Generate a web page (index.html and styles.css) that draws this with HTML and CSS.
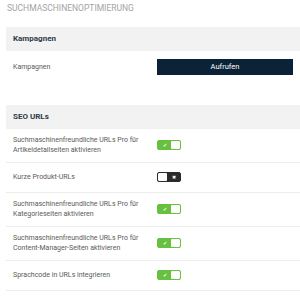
FILE: index.html
```html
<!DOCTYPE html>
<html lang="de">
<head>
    <meta charset="UTF-8">
    <meta name="viewport" content="width=device-width, initial-scale=1.0">
    <title>Suchmaschinenoptimierung</title>
    <link rel="stylesheet" href="styles.css">
</head>
<body>
    <div id="content">
        <h2 class="page-title">Suchmaschinenoptimierung</h2>

        <div class="section">
            <div class="section-header">Kampagnen</div>
            <div class="setting-row">
                <span class="setting-label">Kampagnen</span>
                <button type="button" class="btn-open">Aufrufen</button>
            </div>
        </div>

        <div class="section">
            <div class="section-header">SEO URLs</div>
            <div class="setting-row bordered">
                <span class="setting-label">Suchmaschinenfreundliche URLs Pro für Artikeldetailseiten aktivieren</span>
                <span class="switch on"><span class="switch-state">&#10004;</span><span class="switch-knob"></span></span>
            </div>
            <div class="setting-row bordered">
                <span class="setting-label">Kurze Produkt-URLs</span>
                <span class="switch off"><span class="switch-knob"></span><span class="switch-state">&#10006;</span></span>
            </div>
            <div class="setting-row bordered">
                <span class="setting-label">Suchmaschinenfreundliche URLs Pro für Kategorieseiten aktivieren</span>
                <span class="switch on"><span class="switch-state">&#10004;</span><span class="switch-knob"></span></span>
            </div>
            <div class="setting-row bordered">
                <span class="setting-label">Suchmaschinenfreundliche URLs Pro für Content-Manager-Seiten aktivieren</span>
                <span class="switch on"><span class="switch-state">&#10004;</span><span class="switch-knob"></span></span>
            </div>
            <div class="setting-row bordered">
                <span class="setting-label">Sprachcode in URLs integrieren</span>
                <span class="switch on"><span class="switch-state">&#10004;</span><span class="switch-knob"></span></span>
            </div>
        </div>
    </div>
</body>
</html>
```

FILE: styles.css
```css
body {
    margin: 0;
    font-family: Roboto, "Liberation Sans", sans-serif;
    color: #5a5a5a;
    background-color: #fff;
}

#content {
    padding: 3px 0 0 6px;
}

.page-title {
    margin: 0 0 14px 1px;
    font-size: 8.5px;
    font-weight: normal;
    text-transform: uppercase;
    color: #a3a3a3;
    line-height: 10px;
}

.section {
    margin-bottom: 23px;
}

    .section .section-header {
        height: 24px;
        line-height: 24px;
        padding-left: 7px;
        background-color: #f2f2f2;
        font-size: 8px;
        font-weight: bold;
        color: #2e3a46;
    }

.setting-row {
    display: grid;
    grid-template-columns: 144px auto;
    align-items: center;
    min-height: 31px;
    padding: 0 0 0 7px;
    font-size: 7px;
    line-height: 10px;
    box-sizing: border-box;
}

    .setting-row.bordered {
        border-bottom: 1px solid #ececec;
        min-height: 30px;
        padding: 6px 0 7px 7px;
    }

.setting-label {
    padding-right: 8px;
}

.btn-open {
    width: 136px;
    height: 16px;
    padding: 0;
    background-color: #0c2236;
    color: #fff;
    border: none;
    border-radius: 0;
    font-family: inherit;
    font-size: 7.5px;
    cursor: pointer;
}

.switch {
    display: flex;
    width: 24px;
    height: 10px;
    box-sizing: border-box;
    border-radius: 2px;
    overflow: hidden;
}

    .switch.on {
        background-color: #67c03f;
        border: 1px solid #67c03f;
    }

    .switch.off {
        background-color: #2b2b2b;
        border: 1px solid #2b2b2b;
    }

    .switch .switch-state {
        flex: 1;
        color: #fff;
        font-size: 5px;
        line-height: 8px;
        text-align: center;
    }

    .switch .switch-knob {
        width: 9px;
        background-color: #fff;
        border-radius: 1px;
    }
```
